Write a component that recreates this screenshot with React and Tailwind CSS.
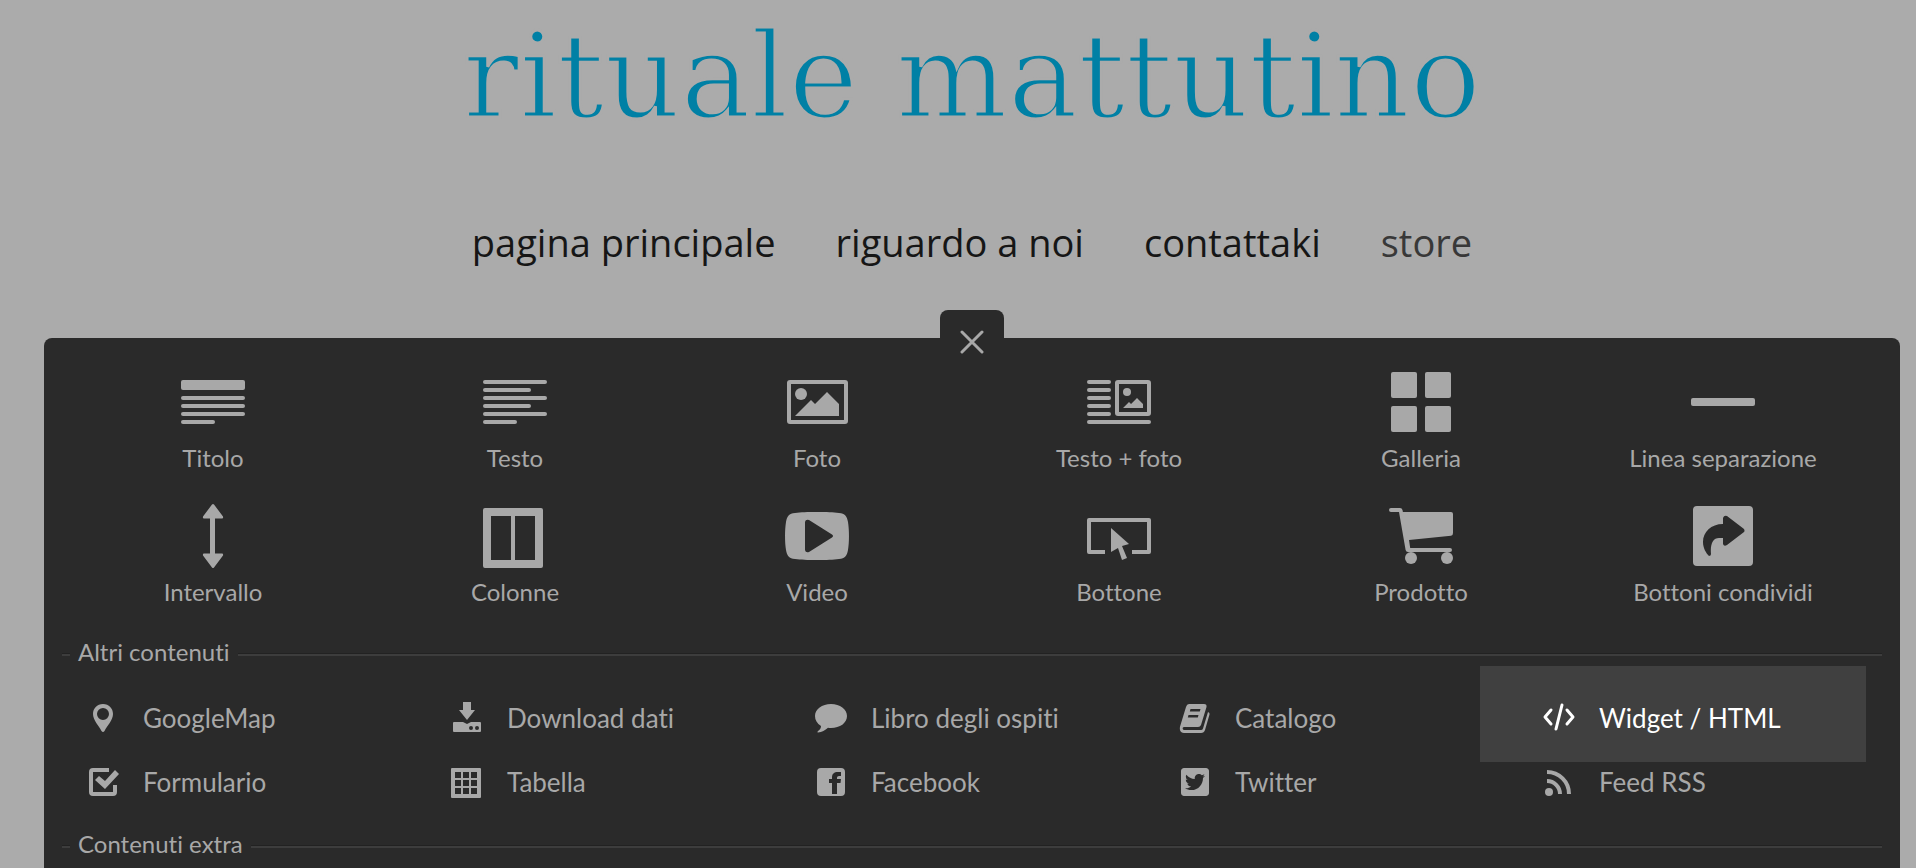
import React from "react";
import { FaTwitterSquare } from "react-icons/fa";

const mainItems = [
  {
    label: "Titolo",
    icon: (
      <g>
        <rect x="0" y="10" width="64" height="10" rx="2" />
        <rect x="0" y="26" width="64" height="4" rx="2" />
        <rect x="0" y="34" width="64" height="4" rx="2" />
        <rect x="0" y="42" width="64" height="4" rx="2" />
        <rect x="0" y="50" width="34" height="4" rx="2" />
      </g>
    ),
  },
  {
    label: "Testo",
    icon: (
      <g>
        <rect x="0" y="10" width="64" height="4" rx="2" />
        <rect x="0" y="18" width="48" height="4" rx="2" />
        <rect x="0" y="26" width="64" height="4" rx="2" />
        <rect x="0" y="34" width="48" height="4" rx="2" />
        <rect x="0" y="42" width="64" height="4" rx="2" />
        <rect x="0" y="50" width="34" height="4" rx="2" />
      </g>
    ),
  },
  {
    label: "Foto",
    icon: (
      <g>
        <rect x="4" y="12" width="57" height="40" rx="1" fill="none" stroke="currentColor" strokeWidth="4" />
        <circle cx="16" cy="24" r="6" />
        <path d="M10 46 26 30l4 4 12-12 12 12v12z" />
      </g>
    ),
  },
  {
    label: "Testo + foto",
    icon: (
      <g>
        <rect x="0" y="10" width="24" height="4" rx="2" />
        <rect x="0" y="18" width="24" height="4" rx="2" />
        <rect x="0" y="26" width="24" height="4" rx="2" />
        <rect x="0" y="34" width="24" height="4" rx="2" />
        <rect x="0" y="42" width="24" height="4" rx="2" />
        <rect x="0" y="50" width="64" height="4" rx="2" />
        <rect x="30" y="12" width="32" height="32" rx="1" fill="none" stroke="currentColor" strokeWidth="4" />
        <circle cx="40" cy="22" r="4" />
        <path d="m36 38 6-6 2 2 6-6 6 6v4z" />
      </g>
    ),
  },
  {
    label: "Galleria",
    icon: (
      <g>
        <rect x="2" y="2" width="26" height="26" rx="2" />
        <rect x="36" y="2" width="26" height="26" rx="2" />
        <rect x="2" y="36" width="26" height="26" rx="2" />
        <rect x="36" y="36" width="26" height="26" rx="2" />
      </g>
    ),
  },
  { label: "Linea separazione", icon: <rect x="0" y="28" width="64" height="8" rx="2" /> },
  {
    label: "Intervallo",
    icon: (
      <path d="M31 .5q1-1 2 0l9 12q.5 2-1 2h-7v35h7q1.500 0 1 2l-9 12q-1 1-2 0l-9-12q-.5-2 1-2h6v-35h-6q-1.500 0-1-2z" />
    ),
  },
  {
    label: "Colonne",
    icon: (
      <path
        fillRule="evenodd"
        d="M2 4h56a2 2 0 0 1 2 2v56a2 2 0 0 1-2 2H2a2 2 0 0 1-2-2V6a2 2 0 0 1 2-2zm6 8v44h20V12zm24 0v44h20V12z"
      />
    ),
  },
  {
    label: "Video",
    icon: (
      <path
        fillRule="evenodd"
        d="M32 8c10 0 16 .2 22 1 6 .6 8 3 9 9 1.300 8 1.300 20 0 28-1 6-3 8.400-9 9-6 .8-12 1-22 1s-16-.2-22-1c-6-.6-8-3-9-9-1.300-8-1.300-20 0-28 1-6 3-8.400 9-9 6-.8 12-1 22-1zM20 18v28q.5 3 4 2l23-14.500q2-1.500 0-3L24 16q-3.500-1-4 2z"
      />
    ),
  },
  {
    label: "Bottone",
    icon: (
      <g>
        <path d="M18 48H2V16h60v32H45" fill="none" stroke="currentColor" strokeWidth="4" strokeLinejoin="round" />
        <path d="m24 24 18 16-7 2 5 12-5 2-4-12-7 4z" />
      </g>
    ),
  },
  {
    label: "Prodotto",
    icon: (
      <g>
        <path d="M2 4h9q2 0 2.500 2l.4 2H62q2 0 2 2v19q0 2.500-2 2.800L20 36l1.200 8H61a2 2 0 0 1 0 4H19q-2 0-2.400-2L10 8H2a2 2 0 0 1 0-4z" />
        <circle cx="22" cy="54" r="6" />
        <circle cx="58" cy="54" r="6" />
      </g>
    ),
  },
  {
    label: "Bottoni condividi",
    icon: (
      <path
        fillRule="evenodd"
        d="M6 2h52a4 4 0 0 1 4 4v52a4 4 0 0 1-4 4H6a4 4 0 0 1-4-4V6a4 4 0 0 1 4-4zm26 18C20 20 12 28 12 38c0 6 3 11 6 14q2 0 2-2c-1-10 2-16 8-16h4v6q1 3 4 1l17-13q1-1 0-3L36 12q-3-1-4 2z"
      />
    ),
  },
];

const otherItems = [
  {
    label: "GoogleMap",
    icon: (
      <path
        fillRule="evenodd"
        d="M16 2c6 0 10 4.500 10 10 0 6-6 12-8.500 17q-1.500 2-3 0C12 24 6 18 6 12 6 6.500 10 2 16 2zm0 4a6 6 0 1 0 0 12 6 6 0 0 0 0-12z"
      />
    ),
  },
  {
    label: "Download dati",
    icon: (
      <path
        fillRule="evenodd"
        d="M12 0h8v8h4l-8 10-8-10h4zM3 20h9l4 2 4-2h9q1 0 1 1v8q0 1-1 1H3q-1 0-1-1v-8q0-1 1-1zm17 4a2 2 0 1 0 0 4 2 2 0 0 0 0-4zm6 0a2 2 0 1 0 0 4 2 2 0 0 0 0-4z"
      />
    ),
  },
  {
    label: "Libro degli ospiti",
    icon: <path d="M16 2c9 0 16 5 16 12s-7 12-16 12q-2 0-3-.3C10 28.500 7 30 3 30.500q-1-.2-.4-1C4.500 28 6 26.500 6 24 2 21.500 0 18 0 14 0 7 7 2 16 2z" />,
  },
  {
    label: "Catalogo",
    icon: (
      <path
        fillRule="evenodd"
        d="M10 2h15q3 0 2.500 3L22 23q-.8 2-3 2H5c-2 0-1.500 3 0 3h17q1.500 0 2-1.500L29 10q2 .5 1.500 2.500L26 28q-1 3-4 3H5c-4 0-5-4-3.500-8L7 5q.8-3 3-3zm1.500 5-.7 2.500h10l.7-2.500zM9.500 13l-.7 2.500h10l.7-2.500z"
      />
    ),
  },
  {
    label: "Widget / HTML",
    active: true,
    icon: (
      <path
        d="M8 8 2 15l6 7M24 8l6 7-6 7M19 3l-6 24"
        fill="none"
        stroke="currentColor"
        strokeWidth="3"
        strokeLinecap="round"
        strokeLinejoin="round"
      />
    ),
  },
  {
    label: "Formulario",
    icon: (
      <g>
        <path d="M22 4H6q-2 0-2 2v20q0 2 2 2h20q2 0 2-2v-7" fill="none" stroke="currentColor" strokeWidth="4" />
        <path d="m8 14 4-4 6 5L28 4l4 4-14 15z" />
      </g>
    ),
  },
  {
    label: "Tabella",
    icon: (
      <path
        fillRule="evenodd"
        d="M1 2h28q1 0 1 1v28q0 1-1 1H1q-1 0-1-1V3q0-1 1-1zm3 4v6h6V6zm8 0v6h6V6zm8 0v6h6V6zM4 14v6h6v-6zm8 0v6h6v-6zm8 0v6h6v-6zM4 22v6h6v-6zm8 0v6h6v-6zm8 0v6h6v-6z"
      />
    ),
  },
  {
    label: "Facebook",
    icon: (
      <path
        fillRule="evenodd"
        d="M6 2h20a4 4 0 0 1 4 4v20a4 4 0 0 1-4 4H6a4 4 0 0 1-4-4V6a4 4 0 0 1 4-4zm20 4h-3c-4 0-6 2-6 5v2h-3v4h3v11h5V17h3.500l.5-4h-4v-1.500q0-1.500 2-1.500h2z"
      />
    ),
  },
  { label: "Twitter", icon: <FaTwitterSquare size={32} /> },
  {
    label: "Feed RSS",
    icon: (
      <g>
        <circle cx="6" cy="26" r="4" />
        <path d="M4 15a13 13 0 0 1 13 13M4 6a22 22 0 0 1 22 22" fill="none" stroke="currentColor" strokeWidth="4" />
      </g>
    ),
  },
];

const navLinks = ["pagina principale", "riguardo a noi", "contattaki"];

const SectionTitle = ({ children }) => (
  <div className="flex items-center gap-2">
    <span className="w-2 h-[3px] border-t border-t-[#222] border-b-2 border-b-[#3d3d3d]" />
    <h2 className="h-8 text-2xl leading-7 font-normal">{children}</h2>
    <span className="flex-1 h-[3px] border-t border-t-[#222] border-b-2 border-b-[#3d3d3d]" />
  </div>
);

const App = () => (
  <div className="min-h-screen flex flex-col bg-[#ababab] pl-11 pr-4 overflow-hidden">
    <header className="flex flex-col items-center">
      <h1 className="h-[150px] pt-2 text-[118px] leading-[136px] whitespace-nowrap text-[#0080a5] font-['DejaVu_Serif',serif] [-webkit-text-stroke:3px_#ababab]">
        rituale mattutino
      </h1>
      <nav className="h-[160px] pt-16 flex gap-15 text-[38px] leading-14 whitespace-nowrap text-[#161616] font-['Open_Sans',sans-serif]">
        {navLinks.map((l) => (
          <a key={l} href="#">{l}</a>
        ))}
        <a href="#" className="text-[#383838]">store</a>
      </nav>
    </header>

    <section className="flex-1 flex flex-col text-[#a8a8a8] font-['Lato',sans-serif] [font-variant-ligatures:none]">
      <button
        aria-label="Chiudi"
        className="relative self-center size-16 -mb-9 rounded-t-lg bg-[#2a2a2a] flex items-center justify-center"
      >
        <svg width="24" height="24" viewBox="0 0 24 24" stroke="currentColor" strokeWidth="3" strokeLinecap="round">
          <path d="M2 2l20 20M22 2 2 22" />
        </svg>
      </button>
      <div className="flex-1 rounded-t-lg bg-[#2a2a2a] px-[18px] pt-8">
        <div className="grid grid-cols-6 pr-2">
          {mainItems.map(({ label, icon }) => (
            <button key={label} className="h-[134px] flex flex-col items-center">
              <svg width="64" height="64" viewBox="0 0 64 64" fill="currentColor">{icon}</svg>
              <span className="mt-1 text-2xl leading-10">{label}</span>
            </button>
          ))}
        </div>

        <SectionTitle>Altri contenuti</SectionTitle>
        <div className="grid grid-cols-5 py-4">
          {otherItems.map(({ label, icon, active }) => (
            <button
              key={label}
              className={
                active
                  ? "-mt-5 -mb-3 -ml-[38px] mr-4 pt-2 pl-[63px] h-24 flex items-center gap-6 bg-[#404040] text-white"
                  : "pl-[25px] h-16 flex items-center gap-6"
              }
            >
              <svg width="32" height="32" viewBox="0 0 32 32" fill="currentColor">{icon}</svg>
              <span className="text-[26px] leading-10">{label}</span>
            </button>
          ))}
        </div>

        <SectionTitle>Contenuti extra</SectionTitle>
      </div>
    </section>
  </div>
);

export default App;
